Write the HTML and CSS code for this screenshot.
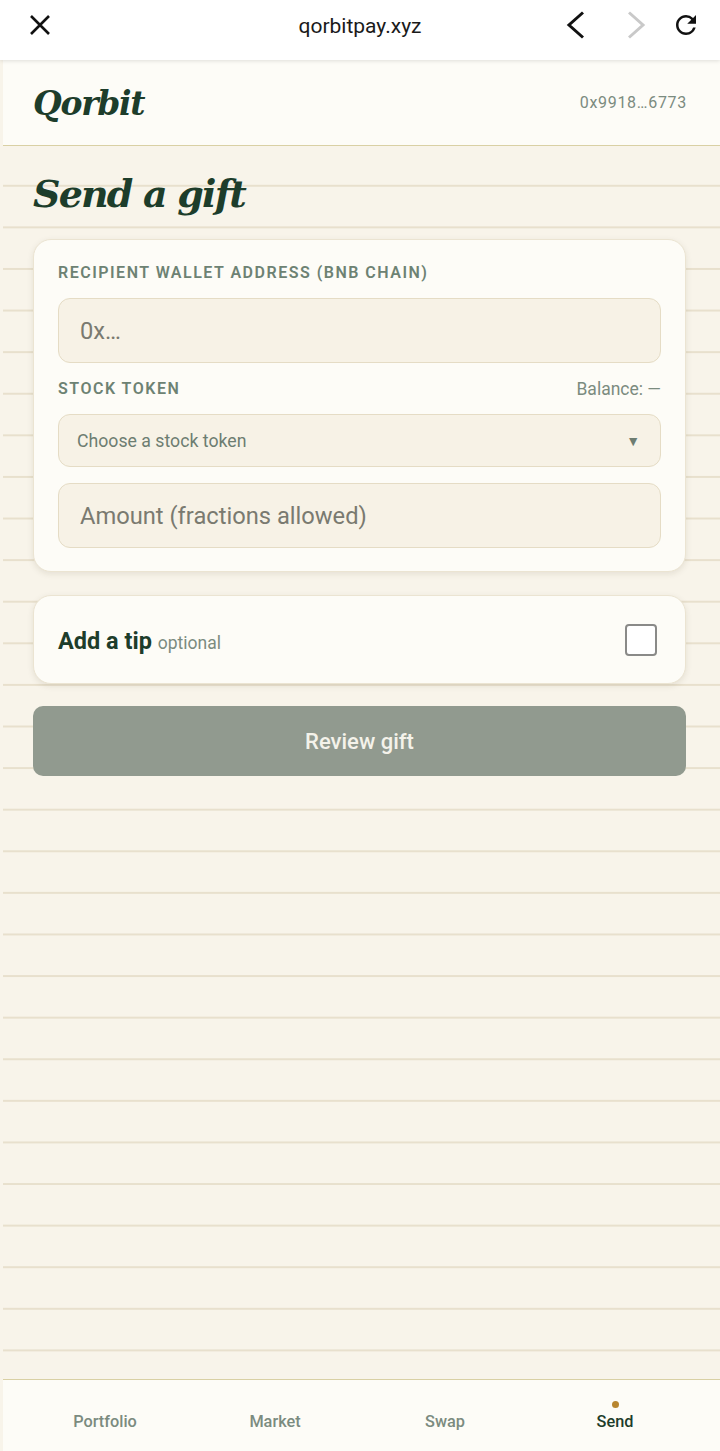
FILE: index.html
```html
<!DOCTYPE html>
<html>
<head lang="en">
	<meta charset="utf-8" name="viewport" content="width=device-width, initial-scale=1.0">
	<title>Qorbit - Send a gift</title>
	<link rel="stylesheet" href="styles.css">
</head>
<body>

	<div class="chrome">
		<div class="chrome-left">
			<svg class="ico-close" width="24" height="24" viewBox="0 0 24 24">
				<path d="M3 3 L21 21 M21 3 L3 21" stroke="#111" stroke-width="2.6" fill="none"/>
			</svg>
		</div>
		<span class="chrome-url">qorbitpay.xyz</span>
		<div class="chrome-right">
			<svg class="ico-back" width="24" height="30" viewBox="0 0 24 30">
				<path d="M19 2.5 L5 15 L19 27.5" stroke="#111" stroke-width="3" fill="none"/>
			</svg>
			<svg class="ico-fwd" width="24" height="30" viewBox="0 0 24 30">
				<path d="M5 2.5 L19 15 L5 27.5" stroke="#c9c9c9" stroke-width="3" fill="none"/>
			</svg>
			<svg class="ico-reload" width="30" height="30" viewBox="0 0 24 24">
				<path d="M17.65 6.35A7.958 7.958 0 0 0 12 4c-4.42 0-7.99 3.58-7.99 8s3.57 8 7.99 8c3.73 0 6.84-2.55 7.730-6h-2.08A5.99 5.99 0 0 1 12 18c-3.31 0-6-2.69-6-6s2.69-6 6-6c1.66 0 3.14.69 4.22 1.78L13 11h7V4l-2.35 2.35z" fill="#111"/>
			</svg>
		</div>
	</div>

	<div class="app">
		<header class="top">
			<span class="logo">Qorbit</span>
			<span class="wallet">0x9918…6773</span>
		</header>

		<main class="main">
			<h1 class="title">Send a gift</h1>

			<section class="card form-card">
				<label class="field-label">Recipient wallet address (BNB Chain)</label>
				<input class="field" type="text" placeholder="0x…">

				<div class="label-row">
					<span class="field-label">Stock token</span>
					<span class="balance">Balance: —</span>
				</div>
				<div class="select">
					<span>Choose a stock token</span>
					<span class="caret">▼</span>
				</div>

				<input class="field" type="text" placeholder="Amount (fractions allowed)">
			</section>

			<section class="card tip-card">
				<span class="tip-title">Add a tip <span class="tip-opt">optional</span></span>
				<span class="checkbox"></span>
			</section>

			<button class="review" type="button">Review gift</button>
		</main>

		<nav class="tabs">
			<span class="tab">Portfolio</span>
			<span class="tab">Market</span>
			<span class="tab">Swap</span>
			<span class="tab active">Send</span>
		</nav>
	</div>

</body>
</html>
```

FILE: styles.css
```css
* {
	margin: 0;
	padding: 0;
	box-sizing: border-box;
}

body {
	font-family: Roboto, "Noto Sans", sans-serif;
	background: #f8f4ea;
	width: 720px;
	height: 1451px;
	overflow: hidden;
}

/* browser bar */
.chrome {
	height: 60px;
	background: #fff;
	display: grid;
	grid-template-columns: 1fr auto 1fr;
	align-items: center;
	position: relative;
	z-index: 2;
	box-shadow: 0 1px 4px rgba(0, 0, 0, 0.12);
}

.chrome-left {
	padding-left: 28px;
	display: flex;
	align-items: center;
	margin-top: -10px;
}

.chrome-url {
	font-size: 21px;
	color: #1a1a1a;
	margin-top: -9px;
}

.chrome-right {
	display: flex;
	justify-content: flex-end;
	align-items: center;
	padding-right: 19px;
	margin-top: -10px;
}

.ico-back { margin-right: 36px; }
.ico-fwd { margin-right: 23px; }

/* app */
.app {
	margin-left: 3px;
	width: 717px;
	height: 1391px;
	display: flex;
	flex-direction: column;
	background-image: linear-gradient(to bottom, #e8e0cd 0, #e8e0cd 1.5px, transparent 1.5px);
	background-size: 100% 41.6px;
}

.top {
	height: 86px;
	background: #fdfcf7;
	border-bottom: 1px solid #d9d0a4;
	display: flex;
	align-items: center;
	justify-content: space-between;
	padding: 0 33px 0 30px;
}

.logo {
	font-family: "DejaVu Serif", "Liberation Serif", serif;
	font-style: italic;
	font-weight: bold;
	font-size: 33px;
	color: #1d3d2b;
	letter-spacing: -1.3px;
	margin-top: 2px;
}

.wallet {
	font-size: 16px;
	color: #7b8b7f;
	letter-spacing: 0.7px;
}

.main {
	flex: 1;
	padding: 24px 34px 0 30px;
}

.title {
	font-family: "DejaVu Serif", "Liberation Serif", serif;
	font-style: italic;
	font-weight: bold;
	font-size: 38px;
	line-height: 48px;
	color: #1d3d2b;
	letter-spacing: -1.8px;
	margin-bottom: 21px;
}

.card {
	background: #fdfcf7;
	border: 1px solid #ebe4d2;
	border-radius: 18px;
	box-shadow: 0 2px 6px rgba(60, 50, 20, 0.10);
}

.form-card {
	display: flex;
	flex-direction: column;
	padding: 24px 24px 23px;
}

.field-label {
	font-size: 16px;
	line-height: 18px;
	font-weight: 600;
	letter-spacing: 1.5px;
	text-transform: uppercase;
	color: #6d8273;
}

.field {
	height: 65px;
	margin-top: 16px;
	background: #f7f2e6;
	border: 1px solid #e5dcc5;
	border-radius: 12px;
	padding: 0 21px;
	font-family: Roboto, sans-serif;
	font-size: 23.7px;
	color: #333;
	outline: none;
}

.field::placeholder {
	color: #7a7a70;
}

.label-row {
	margin-top: 16px;
	display: flex;
	justify-content: space-between;
	align-items: center;
	height: 19px;
}

.balance {
	font-size: 17.5px;
	color: #7b8b7f;
}

.select {
	height: 53px;
	margin-top: 16px;
	background: #f7f2e6;
	border: 1px solid #e5dcc5;
	border-radius: 12px;
	padding: 0 20px 0 18px;
	display: flex;
	align-items: center;
	justify-content: space-between;
	font-size: 17.7px;
	color: #6d7d71;
}

.caret {
	font-size: 14px;
	color: #6d7d71;
}

.tip-card {
	margin-top: 23px;
	height: 89px;
	display: flex;
	align-items: center;
	justify-content: space-between;
	padding: 0 28px 0 24px;
}

.tip-title {
	font-size: 23.5px;
	font-weight: bold;
	color: #1d3d2b;
	margin-top: 2px;
}

.tip-opt {
	font-size: 17.5px;
	font-weight: normal;
	color: #7b8b7f;
}

.checkbox {
	width: 32px;
	height: 32px;
	border: 2px solid #8a8a88;
	border-radius: 4px;
	background: #fff;
}

.review {
	display: block;
	width: 100%;
	height: 70px;
	margin-top: 22px;
	border: none;
	border-radius: 10px;
	background: #919a8f;
	color: #f4f2ea;
	font-family: Roboto, sans-serif;
	font-size: 22px;
	font-weight: 500;
}

/* bottom tabs */
.tabs {
	height: 72px;
	background: #fdfcf7;
	border-top: 1px solid #d9d0a4;
	display: flex;
	padding: 0 20px 0 17px;
}

.tab {
	flex: 1;
	text-align: center;
	font-size: 16.3px;
	font-weight: 500;
	color: #7b8b7f;
	padding-top: 32px;
	position: relative;
}

.tab.active {
	color: #1d3d2b;
}

.tab.active:before {
	content: "";
	position: absolute;
	top: 21px;
	left: 50%;
	width: 7px;
	height: 7px;
	margin-left: -3.5px;
	border-radius: 50%;
	background: #b8862f;
}
```
